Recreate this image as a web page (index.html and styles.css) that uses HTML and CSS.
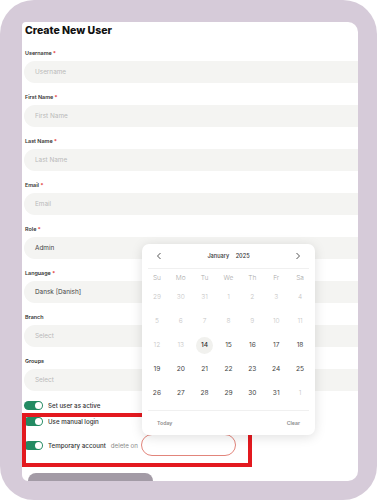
FILE: index.html
```html
<!DOCTYPE html>
<html lang="en">
<head>
    <meta charset="UTF-8">
    <meta name="viewport" content="width=device-width, initial-scale=1.0">
    <title>Create New User</title>
    <link rel="stylesheet" href="styles.css">
</head>
<body>
    <div class="device">
        <div class="screen">
            <h1 class="title">Create New User</h1>

            <div class="fields">
                <div class="field">
                    <label>Username <span class="req">*</span></label>
                    <input type="text" placeholder="Username">
                </div>
                <div class="field">
                    <label>First Name <span class="req">*</span></label>
                    <input type="text" placeholder="First Name">
                </div>
                <div class="field">
                    <label>Last Name <span class="req">*</span></label>
                    <input type="text" placeholder="Last Name">
                </div>
                <div class="field">
                    <label>Email <span class="req">*</span></label>
                    <input type="text" placeholder="Email">
                </div>
                <div class="field">
                    <label>Role <span class="req">*</span></label>
                    <div class="select">Admin</div>
                </div>
                <div class="field">
                    <label>Language <span class="req">*</span></label>
                    <div class="select">Dansk [Danish]</div>
                </div>
                <div class="field">
                    <label>Branch</label>
                    <div class="select empty">Select</div>
                </div>
                <div class="field">
                    <label>Groups</label>
                    <div class="select empty">Select</div>
                </div>
            </div>

            <div class="toggles">
                <div class="toggle-row">
                    <span class="switch"></span>
                    <span>Set user as active</span>
                </div>
                <div class="toggle-row">
                    <span class="switch"></span>
                    <span>Use manual login</span>
                </div>
                <div class="toggle-row date-row">
                    <span class="switch"></span>
                    <span>Temporary account</span>
                    <span class="muted">delete on</span>
                    <span class="date-input"></span>
                </div>
            </div>

            <div class="submit"></div>

            <!-- annotation box drawn over the screenshot -->
            <div class="highlight"></div>

            <div class="datepicker">
                <div class="dp-head">
                    <svg class="dp-nav" width="6" height="8" viewBox="0 0 6 8"><polyline points="4.5,1 1.5,4 4.5,7" fill="none" stroke="#555" stroke-width="1"/></svg>
                    <span class="dp-title">January <span class="dp-year">2025</span></span>
                    <svg class="dp-nav" width="6" height="8" viewBox="0 0 6 8"><polyline points="1.5,1 4.5,4 1.5,7" fill="none" stroke="#555" stroke-width="1"/></svg>
                </div>
                <div class="dp-grid dp-week">
                    <span>Su</span><span>Mo</span><span>Tu</span><span>We</span><span>Th</span><span>Fr</span><span>Sa</span>
                </div>
                <div class="dp-grid dp-days">
                    <span class="off">29</span><span class="off">30</span><span class="off">31</span><span class="off">1</span><span class="off">2</span><span class="off">3</span><span class="off">4</span>
                    <span class="off">5</span><span class="off">6</span><span class="off">7</span><span class="off">8</span><span class="off">9</span><span class="off">10</span><span class="off">11</span>
                    <span class="off">12</span><span class="off">13</span><span><b class="today">14</b></span><span>15</span><span>16</span><span>17</span><span>18</span>
                    <span>19</span><span>20</span><span>21</span><span>22</span><span>23</span><span>24</span><span>25</span>
                    <span>26</span><span>27</span><span>28</span><span>29</span><span>30</span><span>31</span><span class="off">1</span>
                </div>
                <div class="dp-foot">
                    <span>Today</span>
                    <span>Clear</span>
                </div>
            </div>
        </div>
    </div>
</body>
</html>
```

FILE: styles.css
```css
body {
    margin: 0;
    background-color: #fff;
    font-family: Inter, "Liberation Sans", sans-serif;
    color: #222;
}

.device {
    width: 377px;
    height: 500px;
    box-sizing: border-box;
    padding: 22px 19px 19px 22px;
    background-color: #d6cbd9;
    border-radius: 34px;
}

.screen {
    position: relative;
    height: 459px;
    box-sizing: border-box;
    padding: 2px 0 0 2px;
    background-color: #fff;
    border-radius: 4px 10px 10px 6px;
    overflow: hidden;
}

.title {
    margin: 0 0 10px 1px;
    font-size: 10.5px;
    line-height: 14px;
    font-weight: 800;
    color: #111;
}

.field {
    margin-bottom: 9px;
}

.field label {
    display: block;
    margin: 0 0 3px 1px;
    font-size: 5.4px;
    line-height: 10px;
    font-weight: 600;
    color: #333;
}

.req {
    color: #e23b3b;
}

.field input,
.select {
    display: block;
    width: 380px;
    height: 22px;
    box-sizing: border-box;
    padding: 0 0 0 11px;
    border: none;
    border-radius: 11px;
    background-color: #f4f4f2;
    font-family: inherit;
    font-size: 6.4px;
    line-height: 22px;
    color: #444;
    outline: none;
}

.field input::placeholder,
.select.empty {
    color: #b9b9b9;
}

.toggles {
    display: flex;
    flex-direction: column;
    gap: 6px;
    margin-top: 3px;
}

.toggle-row {
    display: flex;
    align-items: center;
    gap: 5px;
    height: 10px;
    font-size: 6.2px;
    font-weight: 500;
    color: #333;
}

.date-row {
    height: 22px;
    margin-top: 2px;
}

.switch {
    position: relative;
    width: 19px;
    height: 9px;
    border-radius: 5px;
    background-color: #238a62;
    flex-shrink: 0;
}

.switch::after {
    content: "";
    position: absolute;
    top: 1px;
    right: 1px;
    width: 7px;
    height: 7px;
    border-radius: 50%;
    background-color: #fff;
}

.muted {
    color: #8a8a8a;
    font-weight: 400;
}

.date-input {
    width: 95px;
    height: 22px;
    box-sizing: border-box;
    margin-left: -2px;
    border: 1px solid #e2857b;
    border-radius: 11px;
    background-color: #fff;
}

.submit {
    width: 125px;
    height: 28px;
    margin: 17px 0 0 4px;
    border-radius: 8px;
    background-color: #a39ba6;
}

.highlight {
    position: absolute;
    left: 0;
    top: 391px;
    width: 230px;
    height: 54px;
    box-sizing: border-box;
    border: 4px solid #e3191f;
}

.datepicker {
    position: absolute;
    left: 120px;
    top: 222px;
    width: 173px;
    height: 191px;
    box-sizing: border-box;
    padding: 0 3px;
    background-color: #fff;
    border-radius: 7px;
    box-shadow: 0 2px 12px rgba(0, 0, 0, 0.13);
}

.dp-head {
    display: flex;
    align-items: center;
    justify-content: space-between;
    height: 24px;
    padding: 0 8px;
    margin: 0 3px;
    border-bottom: 1px solid #f0f0f0;
}

.dp-title {
    font-size: 5.6px;
    font-weight: 500;
    color: #333;
}

.dp-year {
    margin-left: 5px;
}

.dp-grid {
    display: grid;
    grid-template-columns: repeat(7, 1fr);
    justify-items: center;
    align-items: center;
}

.dp-week {
    height: 14px;
    margin-top: 2px;
    font-size: 6.6px;
    font-weight: 300;
    color: #aaa;
}

.dp-days {
    grid-auto-rows: 24px;
    font-size: 6.6px;
    font-weight: 400;
    color: #444;
}

.dp-days .off {
    color: #c4c4c4;
    font-weight: 300;
}

.today {
    display: flex;
    align-items: center;
    justify-content: center;
    width: 17px;
    height: 17px;
    border-radius: 50%;
    background-color: #f1f1ee;
    font-weight: 500;
    color: #333;
}

.dp-foot {
    display: flex;
    align-items: center;
    justify-content: space-between;
    height: 23px;
    margin: 5px 3px 0;
    padding: 0 9px;
    border-top: 1px solid #f0f0f0;
    font-size: 5.2px;
    font-weight: 600;
    color: #8c8c8c;
}
```
